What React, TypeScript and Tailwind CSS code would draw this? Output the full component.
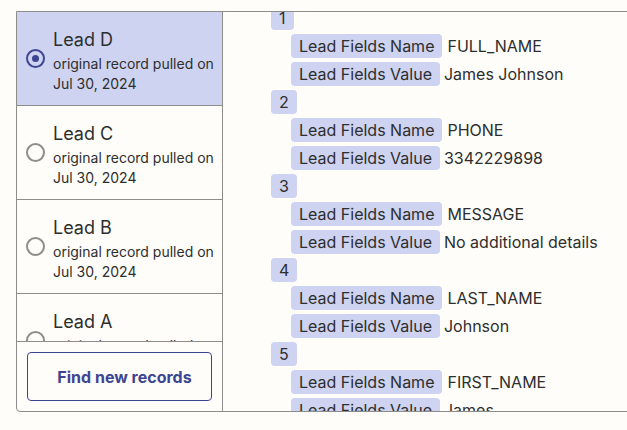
import type { ReactNode } from 'react'

const LEADS = [
  { name: 'Lead D', selected: true },
  { name: 'Lead C', selected: false },
  { name: 'Lead B', selected: false },
  { name: 'Lead A', selected: false },
]

const FIELDS = [
  { name: 'FULL_NAME', value: 'James Johnson' },
  { name: 'PHONE', value: '3342229898' },
  { name: 'MESSAGE', value: 'No additional details' },
  { name: 'LAST_NAME', value: 'Johnson' },
  { name: 'FIRST_NAME', value: 'James' },
]

function Radio({ checked }: { checked: boolean }) {
  if (checked) {
    return (
      <span className="flex h-[19px] w-[19px] shrink-0 items-center justify-center rounded-full border-2 border-[#3d4592]">
        <span className="h-[7px] w-[7px] rounded-full bg-[#3d4592]" />
      </span>
    )
  }
  return <span className="h-[19px] w-[19px] shrink-0 rounded-full border-2 border-[#8f8d8a]" />
}

function Pill({ children }: { children: ReactNode }) {
  return (
    <span className="inline-flex h-6 items-center rounded-[4px] bg-[#cdd3f0] px-2 text-[16px] leading-6 text-[#2d2e2e]">
      {children}
    </span>
  )
}

export default function App() {
  return (
    <div
      className="h-[430px] w-[627px] overflow-hidden bg-[#fffdf9] pl-4 pt-[11px] text-[#2d2e2e]"
      style={{ fontFamily: 'Inter, "Noto Sans", sans-serif' }}
    >
      <div className="flex h-[401px] w-[660px] overflow-hidden rounded-bl-[4px] border border-[#8f8d8a]">
        <div className="flex w-[206px] shrink-0 flex-col border-r border-[#8f8d8a]">
          <ul className="flex-1 overflow-hidden">
            {LEADS.map((lead) => (
              <li
                key={lead.name}
                className={`flex h-[94px] items-center gap-[8px] border-b border-[#8f8d8a] pl-[9px] ${lead.selected ? 'bg-[#cdd3f0]' : ''}`}
              >
                <Radio checked={lead.selected} />
                <div className="flex flex-col pt-[3px]">
                  <span className="text-[18px] leading-7">{lead.name}</span>
                  <span className="text-[14px] leading-5">original record pulled on</span>
                  <span className="text-[14px] leading-5">Jul 30, 2024</span>
                </div>
              </li>
            ))}
          </ul>
          <div className="border-t border-[#8f8d8a] px-[10px] py-[10px]">
            <button className="h-[49px] w-full rounded-[4px] border border-[#3d4592] pl-[10px] text-[16px] font-bold text-[#3d4592]">
              Find new records
            </button>
          </div>
        </div>

        <div className="flex-1 overflow-hidden pl-12">
          <div className="-mt-[6px] flex flex-col gap-1">
            {FIELDS.map((f, i) => (
              <div key={f.name} className="flex flex-col gap-1">
                <div>
                  <Pill>{i + 1}</Pill>
                </div>
                <div className="flex flex-col gap-1 pl-5">
                  <div className="flex items-center gap-[5px]">
                    <Pill>Lead Fields Name</Pill>
                    <span className="text-[16px] leading-6">{f.name}</span>
                  </div>
                  <div className="flex items-center gap-[4px]">
                    <Pill>Lead Fields Value</Pill>
                    <span className="text-[16px] leading-6">{f.value}</span>
                  </div>
                </div>
              </div>
            ))}
          </div>
        </div>
      </div>
    </div>
  )
}
